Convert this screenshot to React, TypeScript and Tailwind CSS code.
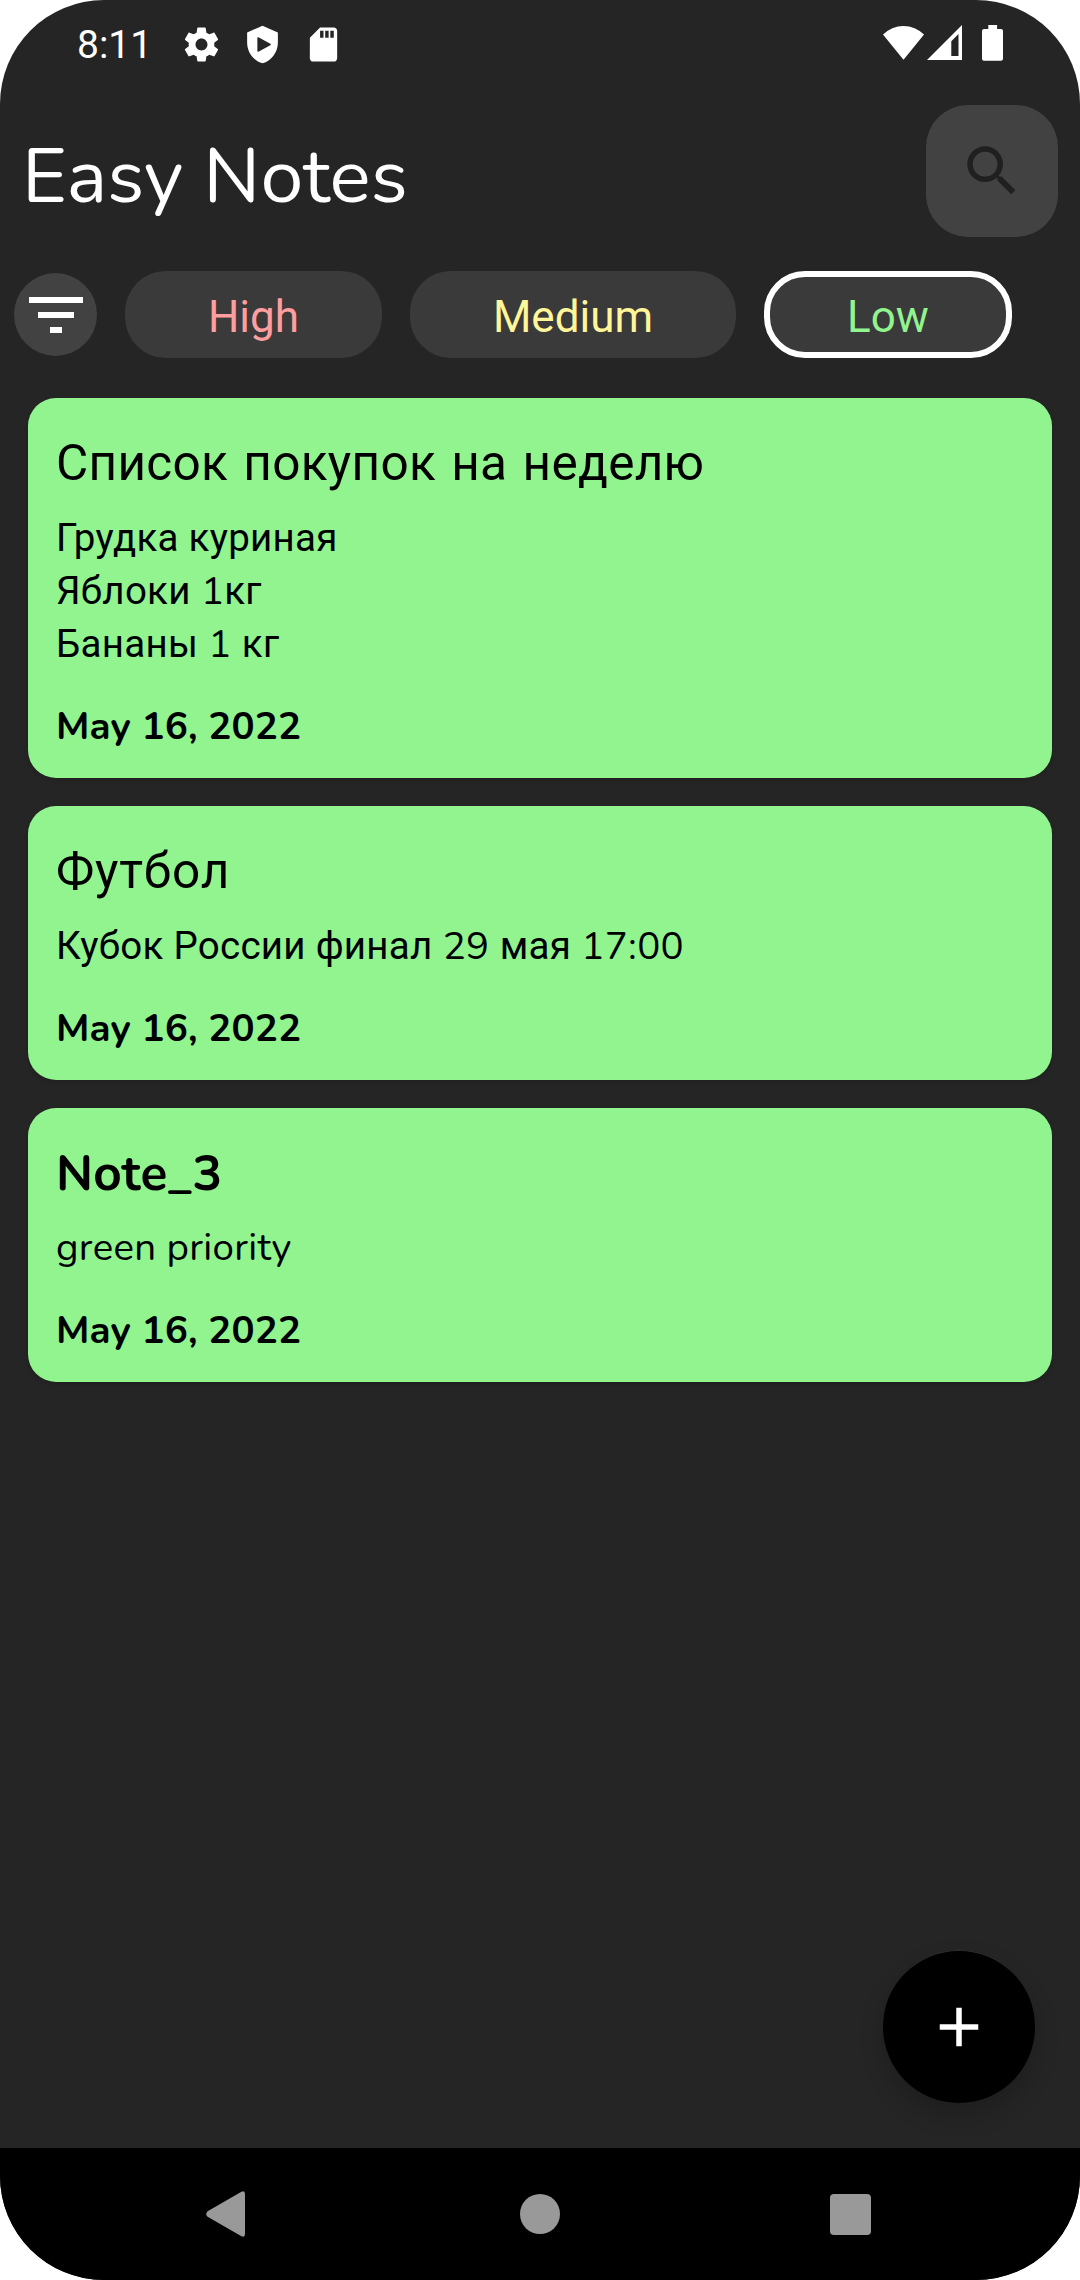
import type { ReactNode } from "react";

const nunito = "font-[Nunito,Lato,sans-serif]";

function StatusBar() {
  return (
    <div className="flex h-[105px] items-start justify-between pl-[77px] pr-[77px] text-white">
      <div className="flex items-center pt-[22px]">
        <span className="w-[104px] pt-[2px] text-[39px] leading-[42px]">8:11</span>
        <div className="flex gap-5">
          <svg className="size-[41px]" viewBox="0 0 24 24" fill="currentColor">
            <path d="M19.43 12.98c.04-.32.07-.64.07-.98s-.03-.66-.07-.98l2.11-1.65c.19-.15.24-.42.12-.64l-2-3.46c-.12-.22-.39-.3-.61-.22l-2.49 1c-.52-.4-1.08-.73-1.69-.98l-.38-2.65C14.46 2.18 14.25 2 14 2h-4c-.25 0-.46.18-.49.42l-.38 2.65c-.61.25-1.17.59-1.69.98l-2.49-1c-.23-.09-.49 0-.61.22l-2 3.46c-.13.22-.07.49.12.64l2.11 1.65c-.04.32-.07.65-.07.98s.03.66.07.98l-2.11 1.65c-.19.15-.24.42-.12.64l2 3.46c.12.22.39.3.61.22l2.49-1c.52.4 1.08.73 1.69.98l.38 2.65c.03.24.24.42.49.42h4c.25 0 .46-.18.49-.42l.38-2.65c.61-.25 1.17-.59 1.69-.98l2.49 1c.23.09.49 0 .61-.22l2-3.46c.12-.22.07-.49-.12-.64l-2.11-1.65zM12 15.5c-1.93 0-3.5-1.57-3.5-3.5s1.57-3.5 3.5-3.5 3.5 1.57 3.5 3.5-1.57 3.5-3.5 3.5z" />
          </svg>
          <svg className="size-[41px]" viewBox="0 0 24 24" fill="currentColor" fillRule="evenodd">
            <path d="M12 1 3 5v6c0 5.55 3.84 10.74 9 12 5.16-1.26 9-6.45 9-12V5zM9 8.2v7.6c0 .4.3.5.6.4l7-3.8c.4-.2.4-.6 0-.8l-7-3.8c-.3-.1-.6 0-.6.4z" />
          </svg>
          <svg className="size-[41px]" viewBox="0 0 24 24" fill="currentColor">
            <path d="M18 2h-8L4.02 8 4 20c0 1.1.9 2 2 2h12c1.1 0 2-.9 2-2V4c0-1.1-.9-2-2-2zm-6 6h-2V4h2v4zm3 0h-2V4h2v4zm3 0h-2V4h2v4z" />
          </svg>
        </div>
      </div>
      <div className="flex pt-[25px]">
        <svg className="mr-[3px] h-9 w-[41px]" viewBox="0 0 41 36" fill="currentColor">
          <path d="M0 9.6A28.5 28.5 0 0 1 41 9.6L20.5 34.8z" />
        </svg>
        <svg className="mr-5 h-9 w-[35px]" viewBox="0 0 35 36" fill="currentColor" fillRule="evenodd">
          <path d="M35 0v35H0zM24.3 16.3v14.6h7.2V9z" />
        </svg>
        <svg className="h-9 w-[21px]" viewBox="0 0 21 36" fill="currentColor">
          <path d="M6.3 0h8.8v4H19a2 2 0 0 1 2 2v27.8a2 2 0 0 1-2 2H2a2 2 0 0 1-2-2V6a2 2 0 0 1 2-2h4.3z" />
        </svg>
      </div>
    </div>
  );
}

function Chip({ children, className }: { children: ReactNode; className: string }) {
  return (
    <button className={`flex h-[87px] items-center justify-center rounded-[41px] bg-[#3a3a3a] pt-1 text-[44px] leading-[52px] ${className}`}>
      {children}
    </button>
  );
}

function Num({ children }: { children: ReactNode }) {
  return <span className={`leading-none ${nunito}`}>{children}</span>;
}

function Note({ title, children, date }: { title: ReactNode; children: ReactNode; date: string }) {
  return (
    <article className="rounded-[28px] bg-[#91f48f] px-7 pt-8 pb-[25px] text-black shadow-[0_2px_4px_rgba(0,0,0,0.15)]">
      <h2 className="h-[67px] text-[49.5px] leading-[67px]">{title}</h2>
      <div className="mt-[14px] text-[38.5px] leading-[53px] tracking-[0.27px]">{children}</div>
      <p className={`mt-[30px] h-[53px] text-[38.5px] leading-[53px] font-bold tracking-[0.15px] ${nunito}`}>{date}</p>
    </article>
  );
}

export default function App() {
  return (
    <div className="h-[2280px] w-[1080px] bg-white">
      <main className="relative flex h-full flex-col overflow-hidden rounded-[104px] bg-[#252525] font-[Roboto,sans-serif]">
        <StatusBar />
        <header className="flex h-[132px] items-center justify-between px-[22px]">
          <h1 className={`pt-[10px] text-[77px] leading-[105px] tracking-[0.1px] text-white ${nunito}`}>Easy Notes</h1>
          <button className="flex size-[132px] items-center justify-center rounded-[42px] bg-[#424242] text-[#202020]">
            <svg className="size-[66px]" viewBox="0 0 24 24" fill="currentColor">
              <path d="M15.5 14h-.79l-.28-.27C15.41 12.59 16 11.11 16 9.5 16 5.91 13.09 3 9.5 3S3 5.91 3 9.5 5.91 16 9.5 16c1.61 0 3.09-.59 4.23-1.57l.27.28v.79l5 4.99L20.49 19l-4.99-5zm-6 0C7.01 14 5 11.99 5 9.5S7.01 5 9.5 5 14 7.01 14 9.5 11.99 14 9.5 14z" />
            </svg>
          </button>
        </header>
        <div className="mt-[34px] flex h-[87px] items-center gap-7 pl-[14px]">
          <button className="flex size-[83px] items-center justify-center rounded-full bg-[#424242] text-white">
            <svg className="size-[72px]" viewBox="0 0 24 24" fill="currentColor">
              <path d="M10 18h4v-2h-4v2zM3 6v2h18V6H3zm3 7h12v-2H6v2z" />
            </svg>
          </button>
          <Chip className="w-[257px] text-[#ff9e9e]">High</Chip>
          <Chip className="w-[326px] text-[#fff599]">Medium</Chip>
          <Chip className="w-[248px] border-[6px] border-white text-[#91f48f]">Low</Chip>
        </div>
        <section className="mt-10 flex flex-1 flex-col gap-7 px-7">
          <Note title={<span className="tracking-[0.3px] [word-spacing:2.7px]">Список покупок на неделю</span>} date="May 16, 2022">
            <p className="h-[53px]">Грудка куриная</p>
            <p className="h-[53px]">Яблоки<Num> 1</Num>кг</p>
            <p className="h-[53px]">Бананы<Num> 1 </Num>кг</p>
          </Note>
          <Note title={<span className="tracking-[0.8px]">Футбол</span>} date="May 16, 2022">
            <p className="h-[53px]">Кубок России финал<Num> 29 </Num>мая<Num> 17:00</Num></p>
          </Note>
          <Note title={<span className={`leading-none font-bold tracking-[0.15px] ${nunito}`}>Note_3</span>} date="May 16, 2022">
            <p className={`h-[53px] ${nunito}`}>green priority</p>
          </Note>
        </section>
        <button className="absolute top-[1950px] left-[883px] flex h-[153px] w-[152px] items-center justify-center rounded-full border-t border-[#2c2c2c] bg-black text-white shadow-[0_12px_24px_rgba(0,0,0,0.2)]">
          <svg className="size-[66px]" viewBox="0 0 24 24" fill="currentColor">
            <path d="M19 13h-6v6h-2v-6H5v-2h6V5h2v6h6v2z" />
          </svg>
        </button>
        <nav className="flex h-[132px] items-center bg-black pl-[206px] text-[#999]">
          <svg className="h-[46px] w-[39px]" viewBox="0 0 39 46" fill="currentColor">
            <path d="M1.6 20.2 35 .9Q39-1 39 3v40q0 4-4 2.1L1.6 25.8Q-1.2 23 1.6 20.2z" />
          </svg>
          <span className="ml-[275px] size-10 rounded-full bg-current" />
          <span className="ml-[270px] size-[41px] rounded-[4px] bg-current" />
        </nav>
      </main>
    </div>
  );
}
